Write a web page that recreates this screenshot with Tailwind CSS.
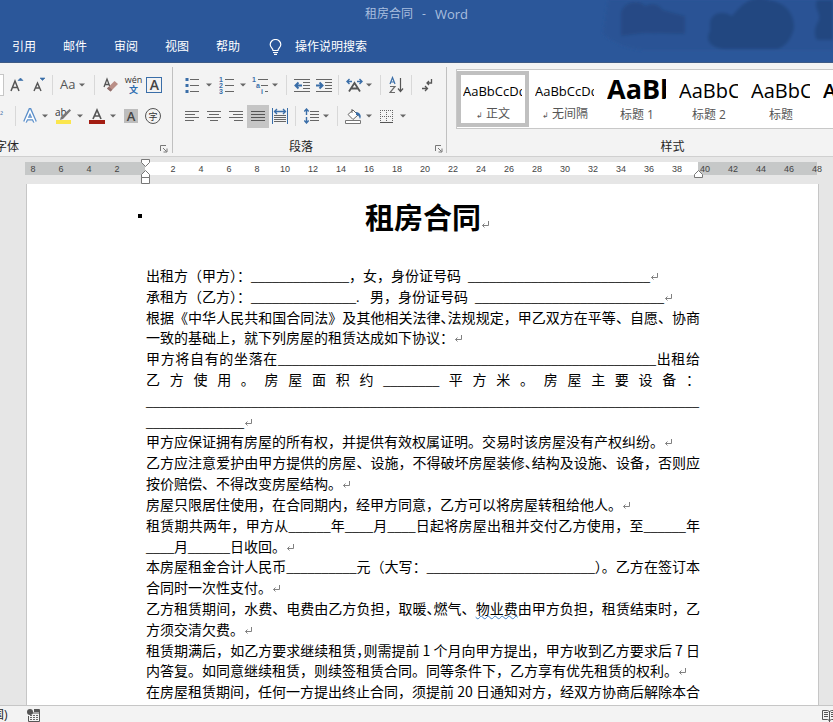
<!DOCTYPE html>
<html lang="zh-CN">
<head>
<meta charset="utf-8">
<title>租房合同 - Word</title>
<script src="https://cdn.jsdelivr.net/npm/@tailwindcss/browser@4"></script>
</head>
<body class="h-screen flex flex-col overflow-hidden bg-[#e6e6e6] text-[12px] text-[#262626] font-['Open_Sans','Noto_Sans_CJK_SC',sans-serif]">
<svg class="hidden" aria-hidden="true">
  <symbol id="caret" viewBox="0 0 6 4"><path d="M0 .5h6L3 3.5z" fill="#666"/></symbol>
  <symbol id="ret" viewBox="0 0 9 8"><path d="M7.500 0v4.500H1.500M3.500 2.500l-2 2 2 2" fill="none" stroke="#808080"/></symbol>
  <symbol id="launch" viewBox="0 0 8 8"><path d="M.5 6V.5H6M3 3l3.500 3.500M7 3.500V7H3.500" fill="none" stroke="#777"/></symbol>
</svg>

<header class="relative shrink-0 h-[63px] bg-[#2b579a] text-white border-b border-[#3d5a85] overflow-hidden">
  <svg class="absolute right-0 top-0" width="250" height="62" viewBox="0 0 250 62" aria-hidden="true">
    <defs><filter id="soft"><feGaussianBlur stdDeviation="1.500"/></filter></defs>
    <g filter="url(#soft)">
      <path d="M25 0h225v50H60C40 48 28 40 20 34z" fill="#275293" opacity=".7"/>
      <path d="M38 12C42 0 58 0 62 6c6-4 14-2 18 4l22 6v18l-40-1-24 3z" fill="#254a85"/>
      <path d="M127 22c2-10 14-12 22-6C160 2 172-6 186 0c16 2 26 14 25 28-2 10-8 18-16 21h-55c-14-2-18-10-13-18z" fill="#244780"/>
      <path d="M250 0h-16c-4 8 4 12 2 20-4 6-6 14-2 20h16z" fill="#244780"/>
    </g>
  </svg>
  <h1 class="relative flex justify-center gap-[9px] h-[28px] leading-[28px] text-[#a9bfdf]"><span>租房合同</span><span>-</span><span class="text-[13px]">Word</span></h1>
  <nav class="relative flex items-center h-[38px] pl-[12px] gap-[27px]">
    <button>引用</button><button>邮件</button><button>审阅</button><button>视图</button><button>帮助</button>
    <button class="pl-[2px] flex items-center gap-[13px]">
      <svg width="13" height="16" viewBox="0 0 13 16" fill="none" stroke="#fff" stroke-width="1.200"><path d="M4 11.500C4 9 1.200 8.500 1.200 5.500a5.200 4.900 0 0 1 10.600 0C11.800 8.500 9 9 9 11.500zM4 13.500h5M5 15.300h3"/></svg>
      <span>操作说明搜索</span>
    </button>
  </nav>
</header>

<section class="shrink-0 h-[94px] flex bg-[#f3f3f3] border-b border-[#d0d0d0] pt-[4px] overflow-hidden" aria-label="功能区">
  <div class="w-[173px] h-[86px] shrink-0 border-r border-[#c0c0c0] flex flex-col">
    <div class="flex items-center h-[36px]">
      <span class="w-[4px] h-[22px] bg-white border border-l-0 border-[#c6c6c6]"></span>
      <button class="ml-[6px]" aria-label="增大字号"><svg width="14" height="18" viewBox="0 0 14 18"><path d="M1 15L5 5l4 10M2.500 11.500h5" fill="none" stroke="#555" stroke-width="1.500"/><path d="M8 4.500h5L10.500 2z" fill="#3a6ea8" stroke="#3a6ea8" stroke-width=".6"/></svg></button>
      <button class="ml-[9px]" aria-label="减小字号"><svg width="14" height="18" viewBox="0 0 14 18"><path d="M1 15L4.500 7 8 15M2.300 12h4.500" fill="none" stroke="#555" stroke-width="1.400"/><path d="M7 2h5L9.500 4.500z" fill="#3a6ea8" stroke="#3a6ea8" stroke-width=".6"/></svg></button>
      <i class="ml-[5px] w-px h-[20px] bg-[#d8d8d8]"></i>
      <button class="ml-[7px] flex items-center gap-[4px] text-[13px] text-[#555]">Aa<svg width="6" height="4"><use href="#caret"/></svg></button>
      <i class="ml-[9px] w-px h-[20px] bg-[#d8d8d8]"></i>
      <button class="ml-[8px]" aria-label="清除格式"><svg width="16" height="18" viewBox="0 0 16 18"><path d="M1 11L4 3l3 8M2 8.500h4" fill="none" stroke="#555" stroke-width="1.300"/><path d="M4 12.500L11.500 5l3.500 3-7.500 7.500z" fill="#b98e86"/><path d="M4 12.500l1.800-1.800 3.500 3-1.800 1.800z" fill="#8f6f6d"/></svg></button>
      <button class="ml-[5px] w-[18px] flex flex-col items-center" aria-label="拼音指南"><span class="text-[9px] leading-[10px] text-[#333]">wén</span><span class="text-[9px] leading-[10px] text-[#2b6cb0] font-bold">文</span></button>
      <button class="ml-[4px] w-[16px] h-[16px] border border-[#3a6ea8] text-[14px] leading-[14px] font-semibold text-[#444]">A</button>
    </div>
    <div class="flex items-center h-[26px]">
      <span class="w-[6px] text-[9px] leading-[18px] text-[#3a6ea8]">²</span>
      <i class="ml-[9px] w-px h-[20px] bg-[#d8d8d8]"></i>
      <button class="ml-[7px] flex items-center gap-[5px]" aria-label="文本效果"><svg width="14" height="16" viewBox="0 0 14 16"><path d="M2 14L7 2.500 12 14M3.800 10.500h6.400" fill="none" stroke="#5b8fca" stroke-width="4"/><path d="M2 14L7 3l5 11M3.800 10.500h6.400" fill="none" stroke="#fff" stroke-width="1.600"/></svg><svg width="6" height="4"><use href="#caret"/></svg></button>
      <button class="ml-[7px] flex items-center gap-[5px]" aria-label="突出显示颜色"><svg width="17" height="18" viewBox="0 0 17 18"><text x="0" y="9" font-size="10" font-family="Open Sans" fill="#333">ab</text><path d="M14.500 2l1.500 1.500L8 12l-3 1 .8-3z" fill="#777"/><path d="M1 13h15v4H1z" fill="#fbe64d"/></svg><svg width="6" height="4"><use href="#caret"/></svg></button>
      <button class="ml-[6px] flex items-center gap-[5px]" aria-label="字体颜色"><svg width="16" height="18" viewBox="0 0 16 18"><path d="M4 12L8 3l4 9M5.300 9h5.400" fill="none" stroke="#555" stroke-width="1.700"/><path d="M0 13h16v4H0z" fill="#a31d12"/></svg><svg width="6" height="4"><use href="#caret"/></svg></button>
      <button class="ml-[8px] w-[14px] h-[14px] bg-[#bdbdbd] text-[13px] leading-[14px] font-semibold text-[#444]">A</button>
      <button class="ml-[7px] w-[16px] h-[16px] rounded-full border border-[#555] text-[9px] leading-[13px] text-[#333]">字</button>
    </div>
    <div class="flex-1 flex items-end justify-between pr-[4px] leading-[12px]"><span class="-ml-[5px]">字体</span><button aria-label="字体设置"><svg width="8" height="8"><use href="#launch"/></svg></button></div>
  </div>

  <div class="w-[274px] h-[86px] shrink-0 border-r border-[#c0c0c0] flex flex-col pl-[12px]">
    <div class="flex items-center h-[36px]">
      <button class="flex items-center gap-[6px]" aria-label="项目符号"><svg width="15" height="16" viewBox="0 0 15 16"><path d="M5 2.500h9M5 8.500h9M5 14.500h9" stroke="#666"/><path d="M.5 1h3v3h-3zM.5 7h3v3h-3zM.5 13h3v3h-3z" fill="#3a6ea8"/></svg><svg width="6" height="4"><use href="#caret"/></svg></button>
      <button class="ml-[7px] flex items-center gap-[5px]" aria-label="编号"><svg width="16" height="18" viewBox="0 0 16 18"><path d="M6 3.500h9M6 9.500h9M6 15.500h9" stroke="#666"/><g font-size="7" font-weight="bold" font-family="Liberation Sans" fill="#3a6ea8"><text y="6">1</text><text y="12">2</text><text y="18">3</text></g></svg><svg width="6" height="4"><use href="#caret"/></svg></button>
      <button class="ml-[6px] flex items-center gap-[3px]" aria-label="多级列表"><svg width="17" height="18" viewBox="0 0 17 18"><path d="M6 3.500h10M9 9.500h7M13 15.500h3" stroke="#666"/><g font-size="7" font-weight="bold" font-family="Liberation Sans" fill="#3a6ea8"><text y="6">1</text><text x="4" y="12">a</text><text x="9" y="18">i</text></g></svg><svg width="6" height="4"><use href="#caret"/></svg></button>
      <i class="ml-[8px] w-px h-[20px] bg-[#d8d8d8]"></i>
      <button class="ml-[7px]" aria-label="减少缩进量"><svg width="16" height="14" viewBox="0 0 16 14"><path d="M0 1.500h16M9 4.500h7M9 7.500h7M9 10.500h7M0 13.500h16" stroke="#666"/><path d="M8 7.500H2M4.500 4.500l-3 3 3 3" fill="none" stroke="#3a6ea8" stroke-width="2"/></svg></button>
      <button class="ml-[6px]" aria-label="增加缩进量"><svg width="16" height="14" viewBox="0 0 16 14"><path d="M0 1.500h16M9 4.500h7M9 7.500h7M9 10.500h7M0 13.500h16" stroke="#666"/><path d="M0 7.500h6M3.500 4.500l3 3-3 3" fill="none" stroke="#3a6ea8" stroke-width="2"/></svg></button>
      <i class="ml-[6px] w-px h-[20px] bg-[#d8d8d8]"></i>
      <button class="ml-[7px] flex items-center gap-[3px]" aria-label="中文版式"><svg width="17" height="16" viewBox="0 0 17 16"><path d="M3 14.500L8.500 6l5.500 8.500M5 11.500h7" fill="none" stroke="#555" stroke-width="1.800"/><path d="M6 4.500H1M3.500 2L1 4.500 3.500 7M11 4.500h5M13.500 2L16 4.500 13.500 7" fill="none" stroke="#3a6ea8" stroke-width="1.400"/></svg><svg width="6" height="4"><use href="#caret"/></svg></button>
      <i class="ml-[8px] w-px h-[20px] bg-[#d8d8d8]"></i>
      <button class="ml-[8px]" aria-label="排序"><svg width="15" height="18" viewBox="0 0 15 18"><path d="M1 8l2.500-6.500L6 8M2 6h3" fill="none" stroke="#3a6ea8" stroke-width="1.200"/><path d="M1 10.500h5L1 16.500h5" fill="none" stroke="#6a6a6a" stroke-width="1.200"/><path d="M11.500 2v13M9 12.500l2.500 3 2.500-3" fill="none" stroke="#555" stroke-width="1.200"/></svg></button>
      <i class="ml-[7px] w-px h-[20px] bg-[#d8d8d8]"></i>
      <button class="ml-[9px]" aria-label="显示编辑标记"><svg width="13" height="14" viewBox="0 0 13 14"><path d="M10.500 1v4H6M8 3L6 5l2 2M1 10.500h5M4 8l2.500 2.500L4 13" fill="none" stroke="#555" stroke-width="1.300"/></svg></button>
    </div>
    <div class="flex items-center h-[26px]">
      <button aria-label="左对齐"><svg width="14" height="11" viewBox="0 0 14 11"><path d="M0 .5h14M0 3.500h10M0 6.500h14M0 9.500h9" stroke="#666"/></svg></button>
      <button class="ml-[8px]" aria-label="居中"><svg width="14" height="11" viewBox="0 0 14 11"><path d="M0 .5h14M2 3.500h10M0 6.500h14M3 9.500h8" stroke="#666"/></svg></button>
      <button class="ml-[8px]" aria-label="右对齐"><svg width="14" height="11" viewBox="0 0 14 11"><path d="M0 .5h14M4 3.500h10M0 6.500h14M5 9.500h9" stroke="#666"/></svg></button>
      <button class="ml-[4px] w-[22px] h-[23px] bg-[#c5c5c5] flex items-center justify-center" aria-label="两端对齐"><svg width="14" height="11" viewBox="0 0 14 11"><path d="M0 .5h14M0 3.500h14M0 6.500h14M0 9.500h14" stroke="#555"/></svg></button>
      <button class="ml-[3px]" aria-label="分散对齐"><svg width="16" height="16" viewBox="0 0 16 16"><path d="M.5 0v16M15.500 0v16" stroke="#3a6ea8"/><path d="M2 3.500h12M5 1L2.500 3.500 5 6M11 1l2.500 2.500L11 6" fill="none" stroke="#3a6ea8" stroke-width="1.300"/><path d="M2 7.500h12M2 9.500h12M2 11.500h12M2 13.500h12" stroke="#666"/></svg></button>
      <i class="ml-[7px] w-px h-[20px] bg-[#d8d8d8]"></i>
      <button class="ml-[8px] flex items-center gap-[4px]" aria-label="行距"><svg width="15" height="16" viewBox="0 0 15 16"><path d="M6 3.500h9M6 6.500h9M6 9.500h9M6 12.500h9" stroke="#666"/><path d="M2.500 1v6M.3 3.500l2.200-2.500 2.200 2.500M2.500 9v6M.3 12.500l2.200 2.500 2.200-2.500" fill="none" stroke="#3a6ea8" stroke-width="1.400"/></svg><svg width="6" height="4"><use href="#caret"/></svg></button>
      <i class="ml-[8px] w-px h-[20px] bg-[#d8d8d8]"></i>
      <button class="ml-[7px] flex items-center gap-[4px]" aria-label="底纹"><svg width="17" height="16" viewBox="0 0 17 16"><path d="M.5 12.500h15v3H.5z" fill="#fff" stroke="#777"/><path d="M3 6.500L8 2l5 5-5 4.500zM7 5V1" fill="#fff" stroke="#666"/><path d="M11 4c4 0 6 4 4 7-1-2-1-4-4-4z" fill="#3a6ea8"/></svg><svg width="6" height="4"><use href="#caret"/></svg></button>
      <button class="ml-[8px] flex items-center gap-[7px]" aria-label="边框"><svg width="13" height="13" viewBox="0 0 13 13"><path d="M0 .5h13M0 6.500h13M.5 0v12M6.500 0v12M12.500 0v12" stroke="#666" stroke-dasharray="1 1"/><path d="M0 12.500h13" stroke="#555"/></svg><svg width="6" height="4"><use href="#caret"/></svg></button>
    </div>
    <div class="flex-1 flex items-end pr-[3px] leading-[12px]"><span class="flex-1 text-center pr-[18px]">段落</span><button aria-label="段落设置"><svg width="8" height="8"><use href="#launch"/></svg></button></div>
  </div>

  <div class="flex-1 min-w-0 flex flex-col pl-[9px] pt-[2px]">
    <div class="flex shrink-0 h-[60px] items-center bg-white border border-r-0 border-[#c8c8c8] overflow-hidden">
      <button class="w-[72px] h-[56px] shrink-0 border-4 border-[#c0c0c0] flex flex-col px-[2px]"><span class="h-[32px] w-[59px] leading-[32px] overflow-hidden text-left text-[13px] text-black">AaBbCcDd</span><span class="w-full text-center leading-[16px] text-[#555]"><small class="text-[8px]">↲</small> 正文</span></button>
      <button class="w-[72px] h-[56px] shrink-0 flex flex-col px-[6px] py-[4px]"><span class="h-[32px] w-[59px] leading-[32px] overflow-hidden text-left text-[13px] text-black">AaBbCcDd</span><span class="w-full text-center leading-[16px] text-[#555]"><small class="text-[8px]">↲</small> 无间隔</span></button>
      <button class="w-[72px] h-[56px] shrink-0 flex flex-col px-[6px] py-[4px]"><span class="h-[32px] w-[59px] leading-[28px] overflow-hidden text-left text-[27px] font-bold text-black">AaBb</span><span class="w-full text-center leading-[16px] text-[#555]">标题 1</span></button>
      <button class="w-[72px] h-[56px] shrink-0 flex flex-col px-[6px] py-[4px]"><span class="h-[32px] w-[59px] leading-[31px] overflow-hidden text-left text-[20px] text-black">AaBbCc</span><span class="w-full text-center leading-[16px] text-[#555]">标题 2</span></button>
      <button class="w-[72px] h-[56px] shrink-0 flex flex-col px-[6px] py-[4px]"><span class="h-[32px] w-[59px] leading-[31px] overflow-hidden text-left text-[20px] text-black">AaBbCc</span><span class="w-full text-center leading-[16px] text-[#555]">标题</span></button>
      <button class="w-[72px] h-[56px] shrink-0 flex flex-col px-[6px] py-[4px]" aria-label="副标题"><span class="h-[32px] w-[59px] leading-[31px] overflow-hidden text-left text-[20px] font-semibold text-black">A</span></button>
    </div>
    <span class="flex-1 flex items-center justify-center pl-[56px] pt-[9px]">样式</span>
  </div>
</section>

<div class="relative shrink-0 mt-[5px] mb-[9px] ml-[25px] mr-[16px] h-[13px] flex text-[9px] leading-[14px] text-[#444] text-center font-['Liberation_Sans',sans-serif]">
  <div class="w-[120px] shrink-0 bg-[#c6c8c8] flex"><div class="flex -ml-[6px]"><span class="w-[28px]">8</span><span class="w-[28px]">6</span><span class="w-[28px]">4</span><span class="w-[28px]">2</span></div></div>
  <div class="relative flex-1 min-w-0 bg-white flex pl-[14px]">
    <span class="w-[28px]">2</span><span class="w-[28px]">4</span><span class="w-[28px]">6</span><span class="w-[28px]">8</span><span class="w-[28px]">10</span><span class="w-[28px]">12</span><span class="w-[28px]">14</span><span class="w-[28px]">16</span><span class="w-[28px]">18</span><span class="w-[28px]">20</span><span class="w-[28px]">22</span><span class="w-[28px]">24</span><span class="w-[28px]">26</span><span class="w-[28px]">28</span><span class="w-[28px]">30</span><span class="w-[28px]">32</span><span class="w-[28px]">34</span><span class="w-[28px]">36</span><span class="w-[28px]">38</span>
    <svg class="absolute -left-[4px] -top-[3px]" width="9" height="25" viewBox="0 0 9 25" fill="#fff" stroke="#777"><path d="M.5.5h8v3l-4 4-4-4zM.5 18.500v-3l4-4 4 4v3zM.5 18.500h8v6h-8z"/></svg>
    <svg class="absolute z-10 -right-[5px] top-[8px]" width="9" height="8" viewBox="0 0 9 8" fill="#fff" stroke="#777"><path d="M.5 7.500v-3l4-4 4 4v3z"/></svg>
  </div>
  <div class="w-[119px] shrink-0 bg-[#c6c8c8] flex"><div class="flex -ml-[7px]"><span class="w-[28px] shrink-0">40</span><span class="w-[28px] shrink-0">42</span><span class="w-[28px] shrink-0">44</span><span class="w-[28px] shrink-0">46</span><span class="w-[28px] shrink-0">48</span></div></div>
</div>

<main class="flex-1 min-h-0 flex pl-[26px] pr-[14px]">
  <article class="flex-1 min-w-0 flex flex-col bg-white border-x border-[#c6c6c6] pl-[119px] pr-[118px] pb-[3px] text-black font-['Noto_Sans_CJK_SC',sans-serif]">
    <h2 class="relative shrink-0 h-[81px] leading-[64px] text-[29px] font-bold text-center whitespace-nowrap"><i class="absolute -left-[8px] top-[30px] w-[4px] h-[4px] bg-black"></i><span class="relative">租房合同<svg class="absolute left-full bottom-[8px]" width="9" height="8"><use href="#ret"/></svg></span></h2>
    <div class="flex-1 min-h-0 grid grid-cols-1 auto-rows-fr text-[14px] leading-[20px] whitespace-nowrap">
      <div>出租方（甲方）：<span class="leading-none font-['Liberation_Serif']">______________</span>，女，身份证号码<span class="leading-none font-['Liberation_Serif'] whitespace-pre">  __________________________</span><svg class="inline align-baseline" width="9" height="8"><use href="#ret"/></svg></div>
      <div>承租方（乙方）：<span class="leading-none font-['Liberation_Serif'] whitespace-pre">_______________.   </span>男，身份证号码<span class="leading-none font-['Liberation_Serif'] whitespace-pre">  ___________________________</span><svg class="inline align-baseline" width="9" height="8"><use href="#ret"/></svg></div>
      <div class="[text-align-last:justify]">根据《中华人民共和国合同法》及其他相关法律<span class="[font-feature-settings:'halt']">、</span>法规规定，甲乙双方在平等、自愿、协商</div>
      <div>一致的基础上，就下列房屋的租赁达成如下协议：<svg class="inline align-baseline" width="9" height="8"><use href="#ret"/></svg></div>
      <div class="[text-align-last:justify]">甲方将自有的坐落在<span class="leading-none font-['Liberation_Serif']">______________________________________________________</span>出租给</div>
      <div class="[text-align-last:justify]">乙方使用。房屋面积约<span class="leading-none font-['Liberation_Serif']">________</span>平方米。房屋主要设备：</div>
      <div><span class="leading-none font-['Liberation_Serif']">_______________________________________________________________________________</span></div>
      <div><span class="leading-none font-['Liberation_Serif']">______________</span><svg class="inline align-baseline" width="9" height="8"><use href="#ret"/></svg></div>
      <div>甲方应保证拥有房屋的所有权，并提供有效权属证明。交易时该房屋没有产权纠纷。<svg class="inline align-baseline" width="9" height="8"><use href="#ret"/></svg></div>
      <div class="[text-align-last:justify]">乙方应注意爱护由甲方提供的房屋、设施，不得破坏房屋装修<span class="[font-feature-settings:'halt']">、</span>结构及设施、设备，否则应</div>
      <div>按价赔偿、不得改变房屋结构。<svg class="inline align-baseline" width="9" height="8"><use href="#ret"/></svg></div>
      <div>房屋只限居住使用，在合同期内，经甲方同意，乙方可以将房屋转租给他人。<svg class="inline align-baseline" width="9" height="8"><use href="#ret"/></svg></div>
      <div class="[text-align-last:justify]">租赁期共两年，甲方从<span class="leading-none font-['Liberation_Serif']">______</span>年<span class="leading-none font-['Liberation_Serif']">____</span>月<span class="leading-none font-['Liberation_Serif']">____</span>日起将房屋出租并交付乙方使用，至<span class="leading-none font-['Liberation_Serif']">______</span>年</div>
      <div><span class="leading-none font-['Liberation_Serif']">____</span>月<span class="leading-none font-['Liberation_Serif']">______</span>日收回。<svg class="inline align-baseline" width="9" height="8"><use href="#ret"/></svg></div>
      <div class="[text-align-last:justify]">本房屋租金合计人民币<span class="leading-none font-['Liberation_Serif']">__________</span>元（大写：<span class="leading-none font-['Liberation_Serif']">________________________</span>）。乙方在签订本</div>
      <div>合同时一次性支付。<svg class="inline align-baseline" width="9" height="8"><use href="#ret"/></svg></div>
      <div class="[text-align-last:justify]">乙方租赁期间，水费、电费由乙方负担，取暖<span class="[font-feature-settings:'halt']">、</span>燃气、<span class="underline decoration-wavy decoration-1 decoration-[#3d7ec4] underline-offset-1">物业费</span>由甲方负担，租赁结束时，乙</div>
      <div>方须交清欠费。<svg class="inline align-baseline" width="9" height="8"><use href="#ret"/></svg></div>
      <div class="[text-align-last:justify]">租赁期满后，如乙方要求继续租赁<span class="[font-feature-settings:'halt']">，</span>则需提前 1 个月向甲方提出，甲方收到乙方要求后 7 日</div>
      <div>内答复。如同意继续租赁，则续签租赁合同。同等条件下，乙方享有优先租赁的权利。<svg class="inline align-baseline" width="9" height="8"><use href="#ret"/></svg></div>
      <div class="[text-align-last:justify]">在房屋租赁期间，任何一方提出终止合同，须提前 20 日通知对方，经双方协商后解除本合</div>
    </div>
  </article>
</main>

<footer class="shrink-0 h-[17px] flex items-center bg-[#f3f3f3] border-t border-[#c6c6c6] overflow-hidden">
  <span class="-ml-[8px] w-[35px] pt-[2px] text-[12px]">国)</span>
  <svg class="mt-[3px]" width="13" height="13" viewBox="0 0 13 13"><path d="M7 .5h5.500v12h-11V7M5 4h7" fill="none" stroke="#555"/><circle cx="3" cy="3" r="3" fill="#555"/><path d="M7 1h5v2H7z" fill="#555"/><path d="M3 6.500h8M3 8.500h8M3 10.500h8" stroke="#666" stroke-dasharray="2 1"/></svg>
  <button class="ml-auto w-[11px] overflow-hidden mt-[2px]" aria-label="阅读视图"><svg class="max-w-none" width="15" height="13" viewBox="0 0 15 13"><path d="M.5 1.500h5l2 1 2-1h5v9h-5l-2 1-2-1h-5zM7.500 2v11M2 3.500h4M2 5.500h4M2 7.500h4M9 3.500h4M9 5.500h4M9 7.500h4" fill="none" stroke="#555"/></svg></button>
</footer>
</body>
</html>
